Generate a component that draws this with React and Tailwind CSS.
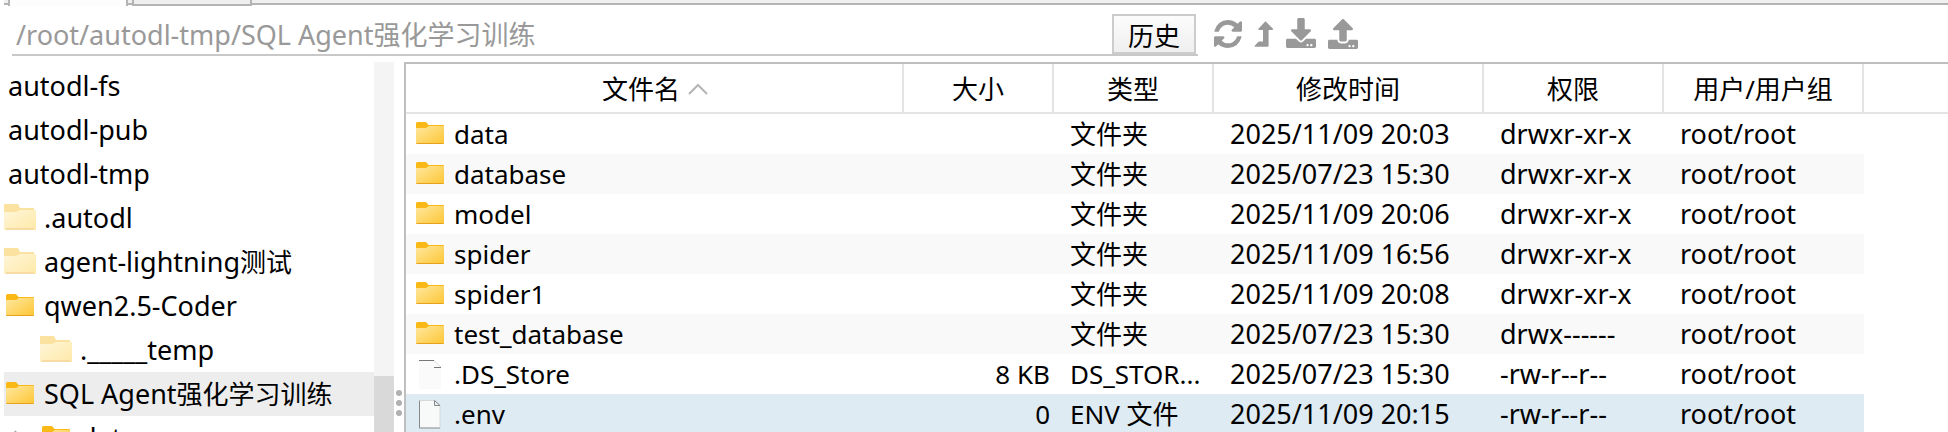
import React from "react";
import { FaDownload, FaUpload } from "react-icons/fa";

function Folder({ className = "" }) {
  return (
    <svg viewBox="0 0 28 22" className={"mb-0.5 h-[22px] w-7 shrink-0 " + className} aria-hidden="true">
      <defs>
        <linearGradient id="folder-face" x1="0" y1="0" x2="1" y2="1">
          <stop offset="0" stopColor="#ffe8a0" />
          <stop offset="1" stopColor="#fdc634" />
        </linearGradient>
      </defs>
      <path d="M0 1.5Q0 0 1.5 0H10L12.5 3H27Q28 3 28 4V20H0Z" fill="#fbb917" />
      <path d="M0 7Q0 6 1 6H10L13 4H28V20.5Q28 22 26.5 22H1.5Q0 22 0 20.5Z" fill="url(#folder-face)" />
      <path d="M0 20.5Q0 22 1.5 22H26.5Q28 22 28 20.5V21H0Z" fill="#e9a01c" />
    </svg>
  );
}

function FadedFolder() {
  return (
    <svg viewBox="0 0 32 26" className="mb-0.5 h-[26px] w-8 shrink-0" aria-hidden="true">
      <defs>
        <linearGradient id="faded-face" x1="0" y1="0" x2="1" y2="1">
          <stop offset="0" stopColor="#fff6d9" />
          <stop offset="1" stopColor="#fee9a8" />
        </linearGradient>
      </defs>
      <path d="M0 0H14L16 4H30V6H32V24H0Z" fill="#fce2a0" />
      <path d="M0 8H12L16 6H32V26H0Z" fill="url(#faded-face)" />
      <path d="M2 24H30V26H2Z" fill="#f7dba3" />
    </svg>
  );
}

function Doc({ outlined }) {
  return outlined ? (
    <svg viewBox="0 0 22 29" className="h-[29px] w-[22px]" aria-hidden="true">
      <path d="M0.5 0.5H16L21 6V28H0.5Z" fill="#f8f9f9" />
      <path d="M0.5 0.5V28H21" fill="none" stroke="#85898b" />
      <path d="M0.5 0.5H16L21 6V28" fill="none" stroke="#c9cdcf" strokeWidth="0.7" />
      <path d="M15.5 0.5V5.5H21Z" fill="#eee" stroke="#85898b" />
    </svg>
  ) : (
    <svg viewBox="0 0 22 29" className="h-[29px] w-[22px]" aria-hidden="true">
      <path d="M0 0H15L22 7V29H0Z" fill="#fafafa" />
      <path d="M0 0.5H15M15 7.5H22" stroke="#777" />
      <path d="M15 0.5L22 7" stroke="#ddd" />
    </svg>
  );
}

function Refresh() {
  return (
    <svg viewBox="0 0 1536 1536" className="size-7" fill="currentColor" aria-hidden="true">
      <path d="M1511 928q0 5-1 7-64 268-268 434.5t-478 166.5q-146 0-282.5-55t-243.5-157l-129 129q-19 19-45 19t-45-19-19-45v-448q0-26 19-45t45-19h448q26 0 45 19t19 45-19 45l-137 137q71 66 161 102t187 36q134 0 250-65t186-179q11-17 53-117 8-23 30-23h192q13 0 22.5 9.5t9.5 22.5zm25-800v448q0 26-19 45t-45 19h-448q-26 0-45-19t-19-45 19-45l138-138q-148-137-349-137-134 0-250 65t-186 179q-11 17-53 117-8 23-30 23h-199q-13 0-22.5-9.5t-9.5-22.5v-7q65-268 270-434.5t480-166.5q146 0 284 55.5t245 156.5l130-129q19-19 45-19t45 19 19 45z" />
    </svg>
  );
}

function LevelUp() {
  return (
    <svg viewBox="0 0 20 26" className="h-[26px] w-5" fill="currentColor" aria-hidden="true">
      <path d="M11.500 0.200L19 7.800Q19.400 9 18.200 9H14.600V24.800Q14.600 25.800 13.600 25.800H1Q0.200 25.600 0.700 24.800L4.200 21Q4.600 20.600 5.200 20.600H9V9H5.200Q4 9 4.400 7.800Z" />
    </svg>
  );
}

const tree = [
  { name: "autodl-fs" },
  { name: "autodl-pub" },
  { name: "autodl-tmp" },
  { name: ".autodl", icon: "faded" },
  { name: "agent-lightning", cjk: "测试", icon: "faded" },
  { name: "qwen2.5-Coder", icon: "folder" },
  { name: "._____temp", icon: "faded", nested: true },
  { name: "SQL Agent", cjk: "强化学习训练", icon: "folder", selected: true },
  { name: "data", icon: "folder", nested: true, expander: true },
];

const files = [
  ["data", "", "文件夹", "2025/11/09 20:03", "drwxr-xr-x"],
  ["database", "", "文件夹", "2025/07/23 15:30", "drwxr-xr-x"],
  ["model", "", "文件夹", "2025/11/09 20:06", "drwxr-xr-x"],
  ["spider", "", "文件夹", "2025/11/09 16:56", "drwxr-xr-x"],
  ["spider1", "", "文件夹", "2025/11/09 20:08", "drwxr-xr-x"],
  ["test_database", "", "文件夹", "2025/07/23 15:30", "drwx------"],
  [".DS_Store", "8 KB", "DS_STOR...", "2025/07/23 15:30", "-rw-r--r--"],
  [".env", "0", "ENV 文件", "2025/11/09 20:15", "-rw-r--r--"],
];

const headers = ["大小", "类型", "修改时间", "权限", "用户/用户组"];

function TreeRow({ item }) {
  return (
    <li>
      <a
        href="#"
        className={"flex h-11 items-center whitespace-nowrap " + (item.selected ? "bg-[#ededed]" : "")}
      >
        {item.nested && (
          <span className="flex w-9 shrink-0 pl-1.5">
            {item.expander && (
              <svg viewBox="0 0 10 16" className="h-4 w-2.5" fill="none" stroke="#a6a6a6" strokeWidth="2" aria-hidden="true">
                <path d="M5 1L9 8L5 15" />
              </svg>
            )}
          </span>
        )}
        {item.icon === "faded" && <FadedFolder />}
        {item.icon === "folder" && <Folder className="mx-0.5" />}
        <span className={item.icon ? "pl-2" : "pl-1"}>
          {item.name}
          {item.cjk && <span className="text-[26px]">{item.cjk}</span>}
        </span>
      </a>
    </li>
  );
}

export default function App() {
  return (
    <div className="flex h-screen flex-col overflow-hidden bg-white font-['Noto_Sans','Noto_Sans_CJK_SC',sans-serif] text-black">
      <div className="flex h-1.5 shrink-0 items-start pl-1">
        <div className="h-[5px] w-1 border-b-2 border-[#b4b4b4] bg-[#f0f0f0]" />
        <div className="h-1.5 w-[120px] border-x-2 border-[#b4b4b4] bg-[#fdfdfd]" />
        <div className="h-[5px] w-1 border-b-2 border-[#b4b4b4] bg-[#f0f0f0]" />
        <div className="h-1.5 w-[120px] border-x-2 border-b-2 border-[#b4b4b4] bg-[#efefef]" />
        <div className="h-[5px] flex-1 border-b-2 border-[#b4b4b4] bg-[#f0f0f0]" />
      </div>

      <div className="flex h-14 shrink-0 items-center pl-3">
        <div className="mt-2 flex h-[42px] max-w-[1186px] flex-1 items-center self-start border-b-2 border-[#c8c8c8] pr-0.5">
          <input
            aria-label="路径"
            readOnly
            value="/root/autodl-tmp/SQL Agent强化学习训练"
            className="h-10 min-w-0 flex-1 px-1 pt-0.5 text-[27px] text-[#999] outline-none"
          />
          <button className="h-10 w-[84px] border-2 border-[#cccccc] bg-linear-to-b from-[#fcfcfc] to-[#efefef] pt-1 text-[26px] leading-8">
            历史
          </button>
        </div>
        <div className="flex items-center gap-3 pl-4 text-[#999]">
          <button aria-label="刷新"><Refresh /></button>
          <button aria-label="上级目录"><LevelUp /></button>
          <button aria-label="下载"><FaDownload className="mb-0.5 size-[30px]" /></button>
          <button aria-label="上传"><FaUpload className="size-[30px]" /></button>
        </div>
      </div>

      <div className="flex min-h-0 flex-1">
        <nav aria-label="目录" className="ml-1 w-[370px] shrink-0 overflow-hidden pt-0.5 text-[27px]">
          <ul>
            {tree.map((item) => (
              <TreeRow key={item.name} item={item} />
            ))}
          </ul>
        </nav>
        <div className="flex w-5 shrink-0 flex-col bg-[#f4f4f4]">
          <div className="mt-auto h-14 bg-[#d9d9d9]" />
        </div>
        <div className="flex w-2.5 shrink-0 flex-col items-center justify-end gap-1 pb-4">
          <i className="size-1.5 rounded-full bg-[#b0b0b0]" />
          <i className="size-1.5 rounded-full bg-[#b0b0b0]" />
          <i className="size-1.5 rounded-full bg-[#b0b0b0]" />
        </div>
        <main className="relative min-w-0 flex-1 overflow-hidden border-t-2 border-l-2 border-[#bfbfbf]">
          <div className="absolute inset-x-0 top-12 h-0.5 bg-[#e4e4e4]" />
          <table className="w-[1458px] table-fixed border-collapse text-[26px] whitespace-nowrap">
            <colgroup>
              <col className="w-[498px]" />
              <col className="w-[150px]" />
              <col className="w-[160px]" />
              <col className="w-[270px]" />
              <col className="w-[180px]" />
              <col className="w-[200px]" />
            </colgroup>
            <thead>
              <tr className="h-[50px] leading-9">
                <th className="p-0 pb-0.5 font-normal">
                  <div className="flex h-12 items-center justify-center gap-2 border-r-2 border-[#e4e4e4] pt-0.5 pl-0.5">
                    文件名
                    <svg viewBox="0 0 20 12" className="h-3 w-5" fill="none" stroke="#b4b4b4" strokeWidth="2" aria-hidden="true">
                      <path d="M1 11L10 2L19 11" />
                    </svg>
                  </div>
                </th>
                {headers.map((h) => (
                  <th key={h} className="p-0 pb-0.5 font-normal">
                    <div className="flex h-12 items-center justify-center border-r-2 border-[#e4e4e4] pt-0.5">{h}</div>
                  </th>
                ))}
              </tr>
            </thead>
            <tbody>
              {files.map(([name, size, type, date, perm], i) => (
                <tr
                  key={name}
                  className={
                    "h-10 leading-9 " + (i === 7 ? "bg-[#deebf3]" : i % 2 ? "bg-[#f9f9f9]" : "")
                  }
                >
                  <td className="p-0 pl-2.5">
                    <div className="flex items-center gap-2.5">
                      <span className="flex w-7 justify-center">
                        {i < 6 ? <Folder /> : <Doc outlined={i === 7} />}
                      </span>
                      {name}
                    </div>
                  </td>
                  <td className="p-0 pr-1 text-right">{size}</td>
                  <td className="p-0 pl-4">{type}</td>
                  <td className="p-0 pl-4 text-[27px]">{date}</td>
                  <td className="p-0 pl-4 text-[27px]">{perm}</td>
                  <td className="p-0 pl-4 text-[27px]">root/root</td>
                </tr>
              ))}
            </tbody>
          </table>
        </main>
      </div>
    </div>
  );
}
